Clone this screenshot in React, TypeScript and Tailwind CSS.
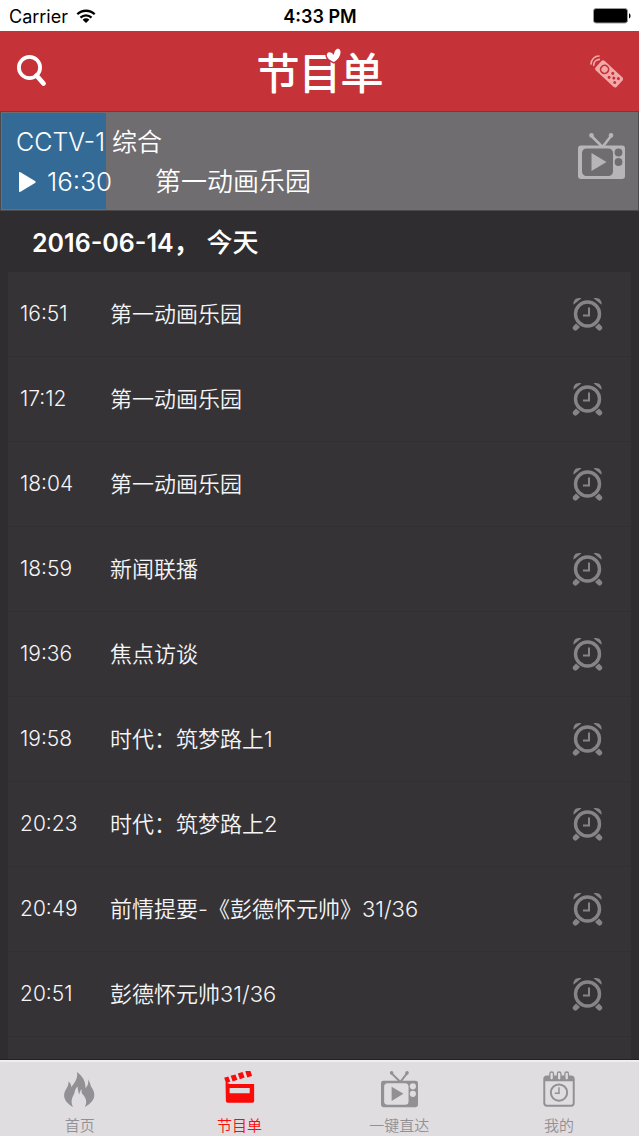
type Programme = { time: string; title: string }

const programmes: Programme[] = [
  { time: '16:51', title: '第一动画乐园' },
  { time: '17:12', title: '第一动画乐园' },
  { time: '18:04', title: '第一动画乐园' },
  { time: '18:59', title: '新闻联播' },
  { time: '19:36', title: '焦点访谈' },
  { time: '19:58', title: '时代：筑梦路上1' },
  { time: '20:23', title: '时代：筑梦路上2' },
  { time: '20:49', title: '前情提要-《彭德怀元帅》31/36' },
  { time: '20:51', title: '彭德怀元帅31/36' },
]

function WifiIcon() {
  return (
    <svg viewBox="0 0 20 14" className="h-[14px] w-5" fill="none" stroke="#000" strokeWidth="2.3">
      <path d="M1.3 5.3a12.4 12.4 0 0 1 17.4 0" />
      <path d="M4.5 8.7a7.9 7.9 0 0 1 11 0" />
      <path d="M10 14l-3.4-3.3a4.9 4.9 0 0 1 6.8 0z" fill="#000" stroke="none" />
    </svg>
  )
}

function BatteryIcon() {
  return (
    <svg viewBox="0 0 38 16" className="h-4 w-[38px]">
      <rect x="0.5" y="0.5" width="34" height="14.5" rx="2.5" fill="#000" stroke="#999" />
      <path d="M36 5.2c2 .8 2 4.4 0 5.2z" fill="#000" />
    </svg>
  )
}

function SearchIcon() {
  return (
    <svg viewBox="0 0 30 32" className="h-8 w-[30px]" fill="none" stroke="#fff">
      <circle cx="12.5" cy="12.5" r="10.6" strokeWidth="3.8" />
      <path d="M19.5 20.5l7 8" strokeWidth="4.8" strokeLinecap="round" />
    </svg>
  )
}

function Logo() {
  return (
    <svg viewBox="0 0 132 60" className="h-[60px] w-[132px]" fill="#fff">
      <text
        x="3"
        y="48"
        fontSize="42"
        fontWeight="300"
        stroke="#fff"
        strokeWidth="2"
        strokeLinejoin="round"
        strokeLinecap="round"
      >
        节目单
      </text>
      <path
        d="M80 21C75 19 72 16 73 13C74 10 78 11 80 14C80 9 84 6 86 9C88 13 84 19 80 21Z"
        stroke="#c53237"
        strokeWidth="3"
        paintOrder="stroke"
      />
    </svg>
  )
}

function RemoteIcon() {
  return (
    <svg viewBox="0 0 99 99" className="size-[33px]">
      <g transform="rotate(43 57 57)">
        <rect x="14" y="37" width="86" height="39" rx="7" fill="#f2a9a8" />
        <circle cx="38" cy="56" r="12" fill="none" stroke="#c53237" strokeWidth="5" />
        <g fill="#c53237">
          <circle cx="64" cy="48" r="4.5" />
          <circle cx="64" cy="64" r="4.5" />
          <circle cx="76" cy="56" r="4.5" />
          <circle cx="87" cy="48" r="4.5" />
          <circle cx="87" cy="64" r="4.5" />
        </g>
      </g>
      <g fill="none" stroke="#f2a9a8" strokeWidth="5" strokeLinecap="round">
        <path d="M3 27C4 13 14 3 27 3" />
        <path d="M11 31c0-9 7-17 17-18" />
      </g>
    </svg>
  )
}

function TvIcon({ className, color, hole }: { className: string; color: string; hole: string }) {
  return (
    <svg viewBox="0 0 47 47" className={className}>
      <path d="M13.500 3l11 11L33 3" fill="none" stroke={color} strokeWidth="2.6" />
      <circle cx="13.5" cy="2.4" r="2.3" fill={color} />
      <circle cx="33" cy="2.4" r="2.3" fill={color} />
      <rect x="0" y="12.5" width="47" height="33.5" rx="3" fill={color} />
      <rect x="4" y="15.5" width="31" height="27.5" rx="4.5" fill={hole} />
      <path d="M13.500 20v18L28.500 29z" fill={color} />
      <circle cx="40.5" cy="19.5" r="3.9" fill={hole} />
      <circle cx="40.5" cy="29" r="3.9" fill={hole} />
    </svg>
  )
}

function AlarmIcon() {
  return (
    <svg viewBox="0 0 32 36" className="h-9 w-8" fill="none" stroke="#858486">
      <circle cx="16.5" cy="18" r="12" strokeWidth="3.4" />
      <path d="M18 11.500v8h-6" strokeWidth="2" />
      <g fill="#858486" stroke="none">
        <path d="M2.500 8.800C2 4 5 1 10.500 2.200z" />
        <path d="M30.500 8.800C31 4 28 1 22.500 2.200z" />
        <path d="M5 27.500l4 3.600-2.500 2.500a2.600 2.600 0 0 1-4-3.600z" />
        <path d="M28 27.500l-4 3.600 2.500 2.500a2.600 2.600 0 0 0 4-3.600z" />
      </g>
    </svg>
  )
}

function FlameIcon() {
  return (
    <svg viewBox="0 0 94 106" className="h-[35px] w-[31px]" fill="currentColor">
      <path d="M39 0C57 12 66 30 65 49C72 42 75 33 73 22C80 32 79 42 86 50C100 74 88 92 63 106C71 92 68 78 54 64C53 60 54 56 53 52C49 56 48 62 46 68C43 60 42 53 41 44C31 54 34 63 28 72C22 84 21 94 27 106C5 94-6 76 4 56C9 48 14 42 14 29C20 34 22 39 22 46C33 31 43 19 39 0Z" />
    </svg>
  )
}

function ClapperIcon() {
  return (
    <svg viewBox="0 0 90 94" className="mb-1 h-8 w-[31px]" fill="currentColor">
      <path d="M0 20l12-4 6 15-12 6zM19 14l14-4 6 16-14 5zM40 7l14-4 6 16-14 5zM62 1l14-4 6 17-14 5z" />
      <path
        fillRule="evenodd"
        d="M4 34l13 4h71v50a5 5 0 0 1-5 5H10a5 5 0 0 1-5-5zM16 50v15h59V50z"
      />
    </svg>
  )
}

function CalendarIcon() {
  return (
    <svg viewBox="0 0 96 110" className="h-9 w-8" fill="none" stroke="currentColor">
      <rect x="3" y="17" width="90" height="89" rx="8" strokeWidth="6" />
      <path d="M3 31V24q0-9 9-9h72q9 0 9 9v7z" fill="currentColor" stroke="none" />
      <g fill="#dfdde0" strokeWidth="4">
        <rect x="20" y="3" width="11" height="25" rx="5.5" />
        <rect x="43" y="3" width="11" height="25" rx="5.5" />
        <rect x="66" y="3" width="11" height="25" rx="5.5" />
      </g>
      <circle cx="48" cy="66" r="25" strokeWidth="6" />
      <path d="M48 50v18H35" strokeWidth="4.5" />
    </svg>
  )
}

const tabs = [
  { label: '首页', icon: <FlameIcon /> },
  { label: '节目单', icon: <ClapperIcon />, active: true },
  { label: '一键直达', icon: <TvIcon className="size-[37px]" color="#929094" hole="#dfdde0" /> },
  { label: '我的', icon: <CalendarIcon /> },
]

function StatusBar() {
  return (
    <div className="grid h-[31px] grid-cols-3 items-center bg-white pt-px pl-[9px] pr-2 text-[18px] text-black">
      <div className="flex items-center gap-2">
        <span>Carrier</span>
        <WifiIcon />
      </div>
      <span className="text-center font-semibold">4:33 PM</span>
      <div className="flex justify-end">
        <BatteryIcon />
      </div>
    </div>
  )
}

function Header() {
  return (
    <header className="flex h-20 items-center justify-between bg-[#c53237] px-4">
      <button type="button" aria-label="搜索" className="w-10 pl-px">
        <SearchIcon />
      </button>
      <h1>
        <Logo />
      </h1>
      <button type="button" aria-label="遥控器" className="flex w-10 justify-end">
        <RemoteIcon />
      </button>
    </header>
  )
}

function NowPlaying({ progress }: { progress: number }) {
  return (
    <section className="relative h-[100px] border border-[#4b494c] bg-[#6f6d70] p-px text-white">
      <div className="absolute top-px bottom-px left-px bg-[#336b96]" style={{ width: `${progress}%` }} />
      <div className="relative flex h-full items-center justify-between pt-[2px] pr-3 pl-[14px]">
        <div className="text-[26px] leading-[39px] font-[350]">
          <h2 className="text-[25px]">CCTV-1 综合</h2>
          <div className="flex items-center">
            <svg viewBox="0 0 17 20" className="ml-[3px] h-5 w-[17px]" fill="#fff">
              <path d="M0 1q0-1.500 1.500-.7L16 9q1.400 1 0 2L1.500 19.700Q0 20.500 0 19z" />
            </svg>
            <span className="ml-[11px] w-[108px]">16:30</span>
            <span>第一动画乐园</span>
          </div>
        </div>
        <button type="button" aria-label="观看" className="mb-3">
          <TvIcon className="size-[47px]" color="#b7b5b8" hole="#6f6d70" />
        </button>
      </div>
    </section>
  )
}

export default function App() {
  return (
    <div className="flex min-h-screen flex-col bg-[#2f2d2f] font-['Inter','Noto_Sans_CJK_SC',sans-serif]">
      <StatusBar />
      <Header />
      <NowPlaying progress={16.3} />

      <main className="flex flex-1 flex-col px-2">
        <h2 className="flex h-[61px] gap-2 pl-6 text-[25px] leading-[64px] font-semibold text-white">
          <span>2016-06-14，</span>
          <span className="text-[26px] font-medium">今天</span>
        </h2>
        <ul className="flex-1 bg-[#353336] text-[22px] font-[350] text-[#f6f5f6]">
          {programmes.map((p) => (
            <li key={p.time} className="flex h-[85px] items-center border-b border-[#312f32] pr-7 pl-3">
              <time className="w-[90px] text-[21px]">{p.time}</time>
              <span className="flex-1">{p.title}</span>
              <button type="button" aria-label={`提醒 ${p.time}`}>
                <AlarmIcon />
              </button>
            </li>
          ))}
        </ul>
      </main>

      <nav className="grid h-[76px] grid-cols-4 border-t-2 border-[#eeedef] bg-[#dfdde0] shadow-[0_-1px_0_#222]">
        {tabs.map((tab) => (
          <a
            key={tab.label}
            href="#"
            className={`flex flex-col items-center text-[15px] leading-5 font-[350] ${tab.active ? 'text-[#fb0a0a]' : 'text-[#929094]'}`}
          >
            <span className="flex h-[54px] items-center">{tab.icon}</span>
            {tab.label}
          </a>
        ))}
      </nav>
    </div>
  )
}
